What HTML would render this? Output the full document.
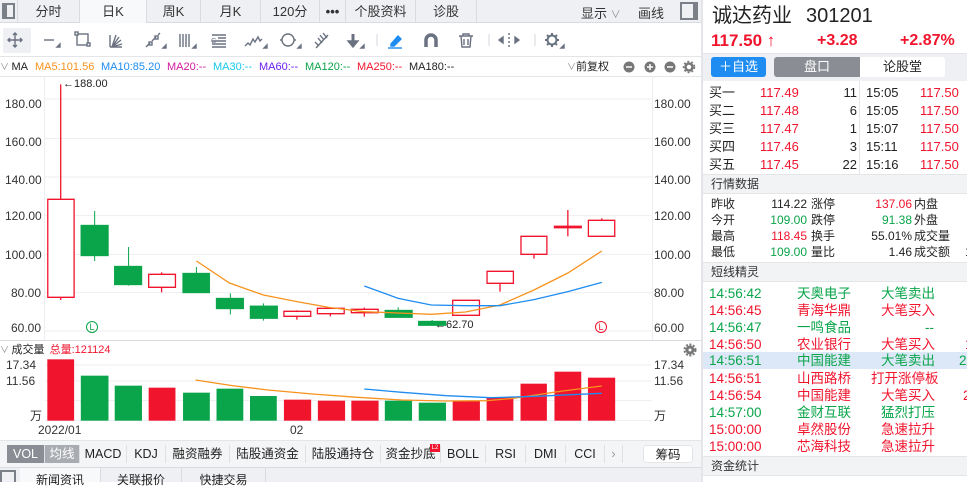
<!DOCTYPE html>
<html><head><meta charset="utf-8"><style>
*{margin:0;padding:0;box-sizing:border-box}
body{width:967px;height:482px;overflow:hidden;background:#fff;font-family:"Liberation Sans","Noto Sans CJK SC",sans-serif;color:#222;position:relative}
.a{position:absolute;white-space:nowrap}
.r{color:#f0142d}.g{color:#0aa54a}
.tab{position:absolute;top:0;height:23px;line-height:23px;font-size:13px;text-align:center;border-right:1px solid #d8dbe0;color:#333}
.row{position:absolute;left:703px;width:264px;font-size:13px;height:17px;line-height:17px}
.hdr{position:absolute;left:703px;width:264px;background:#f2f3f5;font-size:12px;color:#333;padding-left:8px;border-top:1px solid #e3e5e8;border-bottom:1px solid #e3e5e8}
.bt{position:absolute;top:445px;height:18px;line-height:18px;font-size:12.5px;text-align:center;color:#222;background:#f4f5f7;border-right:1px solid #dde0e4}
.sl{font-size:13.5px}
</style></head><body>
<div class="a" style="left:0;top:0;width:701px;height:23px;background:#eef0f3;border-bottom:1px solid #d8dbe0"></div>
<div class="a" style="left:2px;top:3px;width:13px;height:16px;border:2px solid #7a7f88;border-left-width:5px"></div>
<div class="tab" style="left:17px;width:63px;border-left:1px solid #d8dbe0">分时</div>
<div class="tab" style="left:80px;width:67px;background:#f8f9fa">日K</div>
<div class="tab" style="left:147px;width:54px">周K</div>
<div class="tab" style="left:201px;width:60px">月K</div>
<div class="tab" style="left:261px;width:59px">120分</div>
<div class="tab" style="left:320px;width:26px;font-weight:bold">•••</div>
<div class="tab" style="left:346px;width:70px">个股资料</div>
<div class="tab" style="left:416px;width:61px">诊股</div>
<div class="a" style="left:581px;top:3px;font-size:13px;color:#333">显示 <span style="color:#888;font-size:10px">∨</span></div>
<div class="a" style="left:638px;top:3px;font-size:13px;color:#333">画线</div>
<div class="a" style="left:680px;top:2px;width:18px;height:18px;border:2px solid #7a7f88;border-right-width:5px"></div>
<div class="a" style="left:3px;top:28px;width:28px;height:25px;background:#eef0f3;border-radius:2px"></div>
<svg class="a" style="left:0;top:23px" width="700" height="34" fill="none" stroke="#6a7180" stroke-width="1.4">
<path d="M15 10v14M8 17h14M13 12l2-2 2 2M13 22l2 2 2-2M10 15l-2 2 2 2M20 15l2 2-2 2"/>
<path d="M44 17h10"/><path d="M57 24h3v-3z" fill="#6a7180"/>
<rect x="77" y="11" width="11" height="11"/><rect x="75" y="9" width="3" height="3" fill="#fff"/><rect x="87" y="20" width="3" height="3" fill="#fff"/>
<path d="M110 24V12M112 24l4-12M112 24l7-10M112 24l9-7M112 24l10-3M110 24h12"/>
<path d="M146 24l4-4M152 18l4-4M158 12l2-2"/><rect x="149" y="19" width="3" height="3"/><rect x="155" y="13" width="3" height="3"/><path d="M163 25h3v-3z" fill="#6a7180"/>
<path d="M180 11v13M183 11v13M186 11v13M189 11v13"/><path d="M193 25h3v-3z" fill="#6a7180"/>
<path d="M212 12h14M218 15h8M212 18h14M212 21h14M212 24h14"/><text x="211" y="20" font-size="7" fill="#6a7180" stroke="none">G</text>
<path d="M245 23l3-3 2 2 3-6 2 3 3-5 2 4 2-2"/><path d="M264 25h3v-3z" fill="#6a7180"/>
<circle cx="288" cy="17" r="6"/><path d="M280 17h2M294 17h2"/><path d="M298 25h3v-3z" fill="#6a7180"/>
<path d="M316 25l12-13M320 12l4 5M323 10l4 5M318 15l4 5M315 19l4 4"/>
<path d="M353 11v8" stroke-width="3"/><path d="M348 18h10l-5 6z" fill="#6a7180"/><path d="M361 25h3v-3z" fill="#6a7180"/>
<path d="M377 11v12" stroke="#e0e2e6"/>
<path d="M391 21l7-8 3 3-7 7h-3z" fill="#1e8cf0" stroke="#1e8cf0"/><path d="M388 25h14" stroke="#1e8cf0"/>
<path d="M426 24v-7a5 5 0 0 1 10 0v7" stroke-width="3.5"/>
<path d="M459 13h14M463 13v-2h6v2M461 13l1 11h8l1-11M464 16v6M468 16v6"/>
<path d="M489 11v12" stroke="#e0e2e6"/>
<path d="M509 10v14" stroke-dasharray="2 2"/><path d="M499 17l4-3v6zM519 17l-4-3v6z" fill="#6a7180"/>
<path d="M535 11v12" stroke="#e0e2e6"/>
<circle cx="552" cy="17" r="4.5" stroke-width="2"/><path d="M552 10v2M552 22v2M545 17h2M557 17h2M547 12l1.5 1.5M557 12l-1.5 1.5M547 22l1.5-1.5M557 22l-1.5-1.5" stroke-width="2"/><path d="M561 25h3v-3z" fill="#6a7180"/>
</svg>
<div class="a" style="left:0;top:56px;width:701px;height:1px;background:#e3e5e8"></div>
<div class="a" style="left:0;top:60px;font-size:11px;line-height:14px"><span style="color:#888;font-size:9px">∨ </span>MA</div>
<div class="a" style="left:35px;top:60px;font-size:11px;line-height:14px"><span style="color:#f7931e">MA5:101.56</span></div>
<div class="a" style="left:101px;top:60px;font-size:11px;line-height:14px;color:#1e8cf0">MA10:85.20</div>
<div class="a" style="left:167px;top:60px;font-size:11px;line-height:14px;color:#d4199e">MA20:--</div>
<div class="a" style="left:213px;top:60px;font-size:11px;line-height:14px;color:#16c8e8">MA30:--</div>
<div class="a" style="left:259px;top:60px;font-size:11px;line-height:14px;color:#6a1ef0">MA60:--</div>
<div class="a" style="left:305px;top:60px;font-size:11px;line-height:14px;color:#0aa54a">MA120:--</div>
<div class="a" style="left:357px;top:60px;font-size:11px;line-height:14px;color:#f0142d">MA250:--</div>
<div class="a" style="left:409px;top:60px;font-size:11px;line-height:14px;color:#222">MA180:--</div>
<div class="a" style="left:567px;top:60px;font-size:11px;line-height:14px"><span style="color:#888;font-size:9px">∨</span>前复权</div>
<svg class="a" style="left:620px;top:60px" width="80" height="15">
<circle cx="9" cy="7" r="5.5" fill="#777"/><path d="M6 7h6" stroke="#fff" stroke-width="1.5"/>
<circle cx="30" cy="7" r="5.5" fill="#777"/><path d="M27 7h6M30 4v6" stroke="#fff" stroke-width="1.5"/>
<circle cx="50" cy="7" r="5.5" fill="#777"/><path d="M47 7h6" stroke="#fff" stroke-width="1.5"/>
<circle cx="69" cy="7" r="3.5" fill="none" stroke="#777" stroke-width="2.5"/><circle cx="69" cy="7" r="5.5" fill="none" stroke="#777" stroke-width="1.5" stroke-dasharray="2 2"/>
</svg>
<div class="a" style="left:44px;top:77px;width:1px;height:264px;background:#eceef1"></div>
<div class="a" style="left:652px;top:77px;width:1px;height:264px;background:#eceef1"></div>
<div class="a" style="left:0;top:76px;width:701px;height:1px;background:#e3e5e8"></div>
<svg class="a" style="left:0;top:75px" width="700" height="270" viewBox="0 0 1568 810" preserveAspectRatio="none">
<path d="M100 72H1460M100 190H1460M100 306H1460M100 422H1460M100 538H1460M100 653H1460M100 768H1460" stroke="#eceef1" vector-effect="non-scaling-stroke"/>
<g stroke="#f0142d" fill="none" stroke-width="1.3">
<path d="M136 28V675" vector-effect="non-scaling-stroke"/><rect x="107" y="373" width="59" height="294" fill="#fff" vector-effect="non-scaling-stroke"/>
<path d="M362 592V652" vector-effect="non-scaling-stroke"/><rect x="333" y="598" width="60" height="39" fill="#fff" vector-effect="non-scaling-stroke"/>
<path d="M665 706V734" vector-effect="non-scaling-stroke"/><rect x="636" y="709" width="60" height="15" fill="#fff" vector-effect="non-scaling-stroke"/>
<path d="M740 698V724" vector-effect="non-scaling-stroke"/><rect x="711" y="700" width="60" height="16" fill="#fff" vector-effect="non-scaling-stroke"/>
<path d="M816 698V725" vector-effect="non-scaling-stroke"/><rect x="787" y="703" width="60" height="10" fill="#fff" vector-effect="non-scaling-stroke"/>
<path d="M1120 625V650" vector-effect="non-scaling-stroke"/><rect x="1091" y="589" width="59" height="36" fill="#fff" vector-effect="non-scaling-stroke"/>
<path d="M1196 538V551" vector-effect="non-scaling-stroke"/><rect x="1167" y="484" width="58" height="54" fill="#fff" vector-effect="non-scaling-stroke"/>
<path d="M1272 405V484" vector-effect="non-scaling-stroke"/><rect x="1242" y="454" width="60" height="4" fill="#f0142d" vector-effect="non-scaling-stroke"/>
<path d="M1348 430V436" vector-effect="non-scaling-stroke"/><rect x="1318" y="436" width="59" height="48" fill="#fff" vector-effect="non-scaling-stroke"/>
</g>
<g stroke="#0aa54a" fill="#0aa54a">
<path d="M212 408V558M288 516V632M440 576V654M516 655V718M590 685V737M892 697V728M968 735V752" vector-effect="non-scaling-stroke"/>
<rect x="181" y="450" width="62" height="93"/><rect x="256" y="573" width="62" height="57"/><rect x="409" y="594" width="61" height="60"/><rect x="484" y="669" width="62" height="33"/><rect x="560" y="692" width="62" height="39"/><rect x="862" y="705" width="62" height="23"/><rect x="937" y="738" width="62" height="14"/>
</g>
<path d="M1014 676h60v45h-60z" fill="#fff" stroke="#f0142d" stroke-width="1.3" vector-effect="non-scaling-stroke"/>
<path d="M440 558L514 624L590 660L665 680L740 698L816 710L892 714L966 718L1043 711L1120 690L1196 645L1272 594L1348 528" fill="none" stroke="#f7931e" stroke-width="1.3" vector-effect="non-scaling-stroke"/>
<path d="M816 633L892 670L966 690L1043 692L1120 692L1196 674L1272 650L1348 622" fill="none" stroke="#1e8cf0" stroke-width="1.3" vector-effect="non-scaling-stroke"/>
</svg>
<div class="a" style="left:63px;top:78px;font-size:11px">←188.00</div>
<div class="a" style="left:435px;top:319px;font-size:11px">←62.70</div>
<div class="a" style="left:86px;top:321px;width:12px;height:12px;border:1px solid #0aa54a;border-radius:50%;font-size:9px;line-height:10px;text-align:center;color:#0aa54a">L</div>
<div class="a" style="left:595px;top:321px;width:12px;height:12px;border:1px solid #f0142d;border-radius:50%;font-size:9px;line-height:10px;text-align:center;color:#f0142d">L</div>
<div class="a" style="left:5px;top:96px;font-size:12px;line-height:16px;color:#333">180.00</div>
<div class="a" style="left:5px;top:134px;font-size:12px;line-height:16px;color:#333">160.00</div>
<div class="a" style="left:5px;top:172px;font-size:12px;line-height:16px;color:#333">140.00</div>
<div class="a" style="left:5px;top:208px;font-size:12px;line-height:16px;color:#333">120.00</div>
<div class="a" style="left:5px;top:247px;font-size:12px;line-height:16px;color:#333">100.00</div>
<div class="a" style="left:11px;top:285px;font-size:12px;line-height:16px;color:#333">80.00</div>
<div class="a" style="left:11px;top:320px;font-size:12px;line-height:16px;color:#333">60.00</div>
<div class="a" style="left:654px;top:96px;font-size:12px;line-height:16px;color:#333">180.00</div>
<div class="a" style="left:654px;top:134px;font-size:12px;line-height:16px;color:#333">160.00</div>
<div class="a" style="left:654px;top:172px;font-size:12px;line-height:16px;color:#333">140.00</div>
<div class="a" style="left:654px;top:208px;font-size:12px;line-height:16px;color:#333">120.00</div>
<div class="a" style="left:654px;top:247px;font-size:12px;line-height:16px;color:#333">100.00</div>
<div class="a" style="left:654px;top:285px;font-size:12px;line-height:16px;color:#333">80.00</div>
<div class="a" style="left:654px;top:320px;font-size:12px;line-height:16px;color:#333">60.00</div>
<div class="a" style="left:0;top:340px;width:701px;height:1px;background:#d8dbe0"></div>
<div class="a" style="left:0;top:343px;font-size:11px;line-height:14px"><span style="color:#888;font-size:9px">∨ </span>成交量 <span class="r" style="margin-left:2px">总量:121124</span></div>
<svg class="a" style="left:683px;top:343px" width="14" height="14"><circle cx="7" cy="7" r="3" fill="none" stroke="#777" stroke-width="3"/><circle cx="7" cy="7" r="5.5" fill="none" stroke="#777" stroke-width="2" stroke-dasharray="2 1.6"/></svg>
<svg class="a" style="left:0;top:335px" width="700" height="147" viewBox="0 0 1568 441" preserveAspectRatio="none">
<path d="M100 90H1460M100 138H1460M100 197H1460M100 257H1460" stroke="#eceef1" vector-effect="non-scaling-stroke"/>
<g fill="#f0142d"><rect x="106" y="73" width="60" height="184"/><rect x="333" y="158" width="60" height="99"/><rect x="636" y="194" width="61" height="63"/><rect x="712" y="197" width="61" height="60"/><rect x="787" y="197" width="61" height="60"/><rect x="1014" y="197" width="61" height="60"/><rect x="1090" y="187" width="60" height="70"/><rect x="1166" y="146" width="59" height="111"/><rect x="1242" y="110" width="60" height="147"/><rect x="1317" y="128" width="61" height="129"/></g>
<g fill="#0aa54a"><rect x="181" y="122" width="62" height="135"/><rect x="257" y="152" width="61" height="105"/><rect x="410" y="173" width="60" height="84"/><rect x="485" y="161" width="60" height="96"/><rect x="560" y="183" width="60" height="74"/><rect x="862" y="197" width="61" height="60"/><rect x="938" y="203" width="61" height="54"/></g>
<path d="M438 135L520 152L600 165L700 177L800 187L900 195L1000 198L1090 197L1150 190L1250 170L1348 153" fill="none" stroke="#f7931e" stroke-width="1.3" vector-effect="non-scaling-stroke"/>
<path d="M816 162L900 172L1000 182L1100 188L1200 184L1348 175" fill="none" stroke="#1e8cf0" stroke-width="1.3" vector-effect="non-scaling-stroke"/>
</svg>
<div class="a" style="left:6px;top:357px;font-size:12px;line-height:16px;color:#333">17.34</div>
<div class="a" style="left:6px;top:373px;font-size:12px;line-height:16px;color:#333">11.56</div>
<div class="a" style="left:30px;top:408px;font-size:12px;line-height:16px;color:#333">万</div>
<div class="a" style="left:654px;top:357px;font-size:12px;line-height:16px;color:#333">17.34</div>
<div class="a" style="left:654px;top:373px;font-size:12px;line-height:16px;color:#333">11.56</div>
<div class="a" style="left:654px;top:408px;font-size:12px;line-height:16px;color:#333">万</div>
<div class="a" style="left:38px;top:422px;font-size:12px;line-height:16px;color:#333">2022/01</div>
<div class="a" style="left:290px;top:422px;font-size:12px;line-height:16px;color:#333">02</div>
<div class="a" style="left:0;top:440px;width:701px;height:27px;background:#f4f5f7;border-top:1px solid #e3e5e8"></div>
<div class="bt" style="left:7px;width:38px;background:#8a8d93;color:#fff">VOL</div>
<div class="bt" style="left:45px;width:35px;background:#a9acb1;color:#fff">均线</div>
<div class="bt" style="left:80px;width:47px">MACD</div>
<div class="bt" style="left:127px;width:39px">KDJ</div>
<div class="bt" style="left:166px;width:64px">融资融券</div>
<div class="bt" style="left:230px;width:76px">陆股通资金</div>
<div class="bt" style="left:306px;width:75px">陆股通持仓</div>
<div class="bt" style="left:381px;width:60px">资金抄底</div>
<div class="a" style="left:430px;top:444px;width:10px;height:8px;background:#f0142d;color:#fff;font-size:6px;line-height:8px;text-align:center">L2</div>
<div class="bt" style="left:441px;width:45px">BOLL</div>
<div class="bt" style="left:486px;width:40px">RSI</div>
<div class="bt" style="left:526px;width:40px">DMI</div>
<div class="bt" style="left:566px;width:39px">CCI</div>
<div class="bt" style="left:605px;width:18px;color:#999">›</div>
<div class="bt" style="left:643px;width:50px;background:#fff;border:1px solid #e3e5e8;border-radius:3px">筹码</div>
<div class="a" style="left:0;top:467px;width:701px;height:15px;background:#eef0f3;border-top:1px solid #d8dbe0"></div>
<div class="a" style="left:0;top:470px;width:16px;height:12px;border:2px solid #7a7f88;border-bottom:none"></div>
<div class="a" style="left:20px;top:468px;width:81px;height:14px;background:#f8f9fa;border-right:1px solid #d8dbe0;font-size:12px;text-align:center;line-height:24px">新闻资讯</div>
<div class="a" style="left:101px;top:468px;width:81px;height:14px;border-right:1px solid #d8dbe0;font-size:12px;text-align:center;line-height:24px">关联报价</div>
<div class="a" style="left:182px;top:468px;width:84px;height:14px;border-right:1px solid #d8dbe0;font-size:12px;text-align:center;line-height:24px">快捷交易</div>
<div class="a" style="left:701px;top:0;width:2px;height:482px;background:#e3e5e8"></div>
<div class="a" style="left:712px;top:3px;font-size:20px;line-height:26px;color:#222">诚达药业<span style="margin-left:14px">301201</span></div>
<div class="a r" style="left:711px;top:30px;font-size:17px;font-weight:bold;line-height:22px">117.50 ↑</div>
<div class="a r" style="left:817px;top:30px;font-size:16px;font-weight:bold;line-height:22px">+3.28</div>
<div class="a r" style="left:900px;top:30px;font-size:16px;font-weight:bold;line-height:22px">+2.87%</div>
<div class="a" style="left:703px;top:53px;width:264px;height:28px;background:#eef0f3;border-top:1px solid #e3e5e8"></div>
<div class="a" style="left:711px;top:57px;width:55px;height:20px;background:#1e8cf0;border-radius:3px;color:#fff;font-size:13px;line-height:20px;text-align:center">＋自选</div>
<div class="a" style="left:774px;top:57px;width:86px;height:20px;background:#8a8d93;border-radius:3px 0 0 3px;color:#fff;font-size:13px;line-height:20px;text-align:center">盘口</div>
<div class="a" style="left:860px;top:57px;width:85px;height:20px;background:#fff;border-radius:0 3px 3px 0;color:#222;font-size:13px;line-height:20px;text-align:center">论股堂</div>
<div class="a" style="left:859px;top:81px;width:1px;height:93px;background:#e3e5e8"></div>
<div class="row" style="top:84px"><span class="a" style="left:6px">买一</span><span class="a r" style="left:57px">117.49</span><span class="a" style="right:110px">11</span><span class="a" style="left:163px">15:05</span><span class="a r" style="left:217px">117.50</span></div>
<div class="row" style="top:102px"><span class="a" style="left:6px">买二</span><span class="a r" style="left:57px">117.48</span><span class="a" style="right:110px">6</span><span class="a" style="left:163px">15:05</span><span class="a r" style="left:217px">117.50</span></div>
<div class="row" style="top:120px"><span class="a" style="left:6px">买三</span><span class="a r" style="left:57px">117.47</span><span class="a" style="right:110px">1</span><span class="a" style="left:163px">15:07</span><span class="a r" style="left:217px">117.50</span></div>
<div class="row" style="top:138px"><span class="a" style="left:6px">买四</span><span class="a r" style="left:57px">117.46</span><span class="a" style="right:110px">3</span><span class="a" style="left:163px">15:11</span><span class="a r" style="left:217px">117.50</span></div>
<div class="row" style="top:156px"><span class="a" style="left:6px">买五</span><span class="a r" style="left:57px">117.45</span><span class="a" style="right:110px">22</span><span class="a" style="left:163px">15:16</span><span class="a r" style="left:217px">117.50</span></div>
<div class="hdr" style="top:174px;height:20px;line-height:19px">行情数据</div>
<div class="row" style="top:196px;font-size:12px"><span class="a" style="left:8px">昨收</span><span class="a" style="right:160px">114.22</span><span class="a" style="left:108px">涨停</span><span class="a r" style="right:55px">137.06</span><span class="a" style="left:211px">内盘</span></div>
<div class="row" style="top:212px;font-size:12px"><span class="a" style="left:8px">今开</span><span class="a g" style="right:160px">109.00</span><span class="a" style="left:108px">跌停</span><span class="a g" style="right:55px">91.38</span><span class="a" style="left:211px">外盘</span></div>
<div class="row" style="top:228px;font-size:12px"><span class="a" style="left:8px">最高</span><span class="a r" style="right:160px">118.45</span><span class="a" style="left:108px">换手</span><span class="a" style="right:55px">55.01%</span><span class="a" style="left:211px">成交量</span></div>
<div class="row" style="top:244px;font-size:12px"><span class="a" style="left:8px">最低</span><span class="a g" style="right:160px">109.00</span><span class="a" style="left:108px">量比</span><span class="a" style="right:55px">1.46</span><span class="a" style="left:211px">成交额</span><span class="a" style="left:262px">1</span></div>
<div class="hdr" style="top:262px;height:20px;line-height:19px">短线精灵</div>
<div class="row g sl" style="top:285px"><span class="a" style="left:6px">14:56:42</span><span class="a" style="left:94px">天奥电子</span><span class="a" style="left:178px">大笔卖出</span></div>
<div class="row r sl" style="top:302px"><span class="a" style="left:6px">14:56:45</span><span class="a" style="left:94px">青海华鼎</span><span class="a" style="left:178px">大笔买入</span></div>
<div class="row g sl" style="top:319px"><span class="a" style="left:6px">14:56:47</span><span class="a" style="left:94px">一鸣食品</span><span class="a" style="left:222px">--</span></div>
<div class="row r sl" style="top:336px"><span class="a" style="left:6px">14:56:50</span><span class="a" style="left:94px">农业银行</span><span class="a" style="left:178px">大笔买入</span><span class="a" style="left:262px">1</span></div>
<div class="row g sl" style="top:352px;background:#dce8f8"><span class="a" style="left:6px">14:56:51</span><span class="a" style="left:94px">中国能建</span><span class="a" style="left:178px">大笔卖出</span><span class="a" style="left:256px">20</span></div>
<div class="row r sl" style="top:370px"><span class="a" style="left:6px">14:56:51</span><span class="a" style="left:94px">山西路桥</span><span class="a" style="left:168px">打开涨停板</span></div>
<div class="row r sl" style="top:387px"><span class="a" style="left:6px">14:56:54</span><span class="a" style="left:94px">中国能建</span><span class="a" style="left:178px">大笔买入</span><span class="a" style="left:260px">2</span></div>
<div class="row g sl" style="top:404px"><span class="a" style="left:6px">14:57:00</span><span class="a" style="left:94px">金财互联</span><span class="a" style="left:178px">猛烈打压</span></div>
<div class="row r sl" style="top:421px"><span class="a" style="left:6px">15:00:00</span><span class="a" style="left:94px">卓然股份</span><span class="a" style="left:178px">急速拉升</span></div>
<div class="row r sl" style="top:438px"><span class="a" style="left:6px">15:00:00</span><span class="a" style="left:94px">芯海科技</span><span class="a" style="left:178px">急速拉升</span></div>
<div class="hdr" style="top:456px;height:20px;line-height:19px">资金统计</div>
</body></html>
